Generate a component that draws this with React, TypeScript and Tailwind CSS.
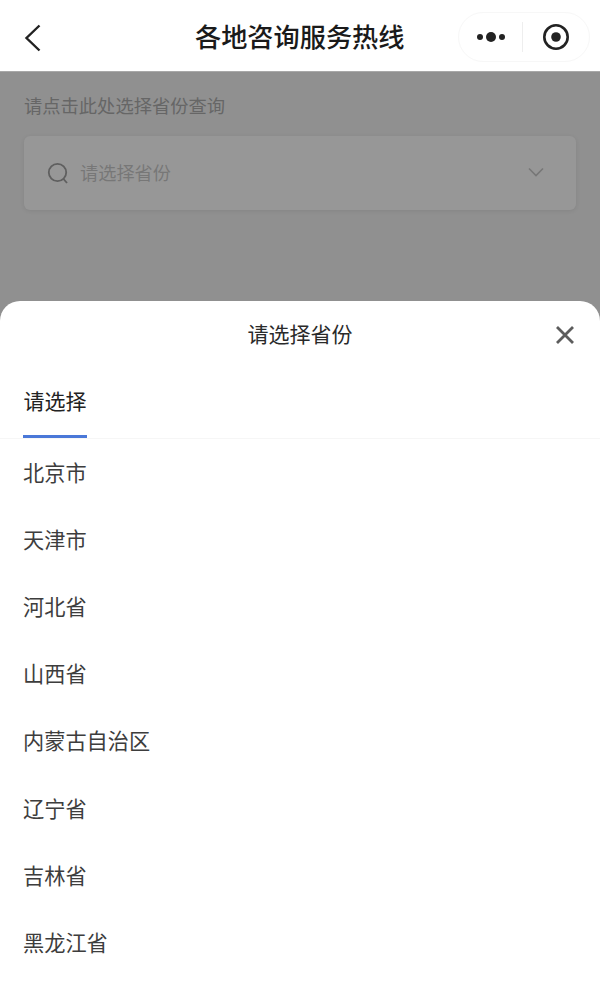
const FONT = "font-['Noto_Sans_CJK_SC','Noto_Sans',sans-serif]";
const provinces = ["北京市", "天津市", "河北省", "山西省", "内蒙古自治区", "辽宁省", "吉林省", "黑龙江省"];

export default function App() {
  return (
    <div className={`${FONT} flex h-[988px] w-[600px] flex-col overflow-hidden bg-[#909090]`}>
      <header className="flex h-[72px] shrink-0 items-center border-b border-[#a8a8a8] bg-white pl-[23px] pr-[10px]">
        <svg width="20" height="30" viewBox="0 0 20 30" fill="none" className="mt-[4px] shrink-0">
          <path d="M16.5 2.5 3.5 15l13 12.5" stroke="#222" strokeWidth="2.4" />
        </svg>
        <h1 className="ml-[152px] flex-1 text-[26.2px] leading-[36px] font-medium whitespace-nowrap text-[#1a1a1a]">各地咨询服务热线</h1>
        <div className="mt-[2px] flex h-[50px] w-[132px] items-center rounded-full border border-[#f7f7f7] bg-white">
          <div className="flex flex-1 items-center justify-center">
            <svg width="30" height="14" viewBox="0 0 30 14" fill="#222">
              <circle cx="4" cy="7" r="3" />
              <circle cx="15" cy="7" r="5" />
              <circle cx="26" cy="7" r="3" />
            </svg>
          </div>
          <div className="h-[30px] w-px bg-[#eeeeee]" />
          <div className="flex w-[66px] items-center justify-center">
            <svg width="28" height="28" viewBox="0 0 28 28" fill="none">
              <circle cx="14" cy="14" r="11.7" stroke="#222" strokeWidth="2.6" />
              <circle cx="14" cy="14" r="4.8" fill="#222" />
            </svg>
          </div>
        </div>
      </header>

      <main className="flex h-[229px] shrink-0 flex-col px-[24px] pt-[18px]">
        <p className="text-[18.3px] leading-[30px] text-[#666666]">请点击此处选择省份查询</p>
        <div className="mt-[16px] flex h-[74px] items-center rounded-[6px] bg-[#979797] pl-[23px] pr-[32px] shadow-[0_1px_4px_rgba(0,0,0,0.08)]">
          <svg width="22" height="24" viewBox="0 0 22 24" fill="none" className="mr-[11px] mt-[2px]">
            <circle cx="10.5" cy="10.5" r="8.7" stroke="#5f5f5f" strokeWidth="1.8" />
            <path d="m16.5 17 3.5 4" stroke="#5f5f5f" strokeWidth="1.8" />
          </svg>
          <span className="flex-1 pb-[2px] text-[18.2px] leading-[26px] text-[#777777]">请选择省份</span>
          <svg width="16" height="10" viewBox="0 0 16 10" fill="none" className="mb-[3px]">
            <path d="m1 1.5 7 7 7-7" stroke="#777" strokeWidth="1.6" />
          </svg>
        </div>
      </main>

      <section className="flex min-h-0 flex-1 flex-col rounded-t-[20px] bg-white">
        <div className="relative flex h-[67px] shrink-0 items-center justify-center">
          <span className="pb-[3px] text-[21px] leading-[30px] text-[#2a2a2a]">请选择省份</span>
          <svg width="20" height="20" viewBox="0 0 20 20" fill="none" className="absolute right-[25px] top-[24px]">
            <path d="m2 2 16 16M18 2 2 18" stroke="#5c5c5c" strokeWidth="2.8" />
          </svg>
        </div>
        <div className="h-[71px] shrink-0 border-b border-[#f6f6f6] px-[23px]">
          <div className="flex h-full w-[64px] flex-col items-center justify-between">
            <span className="pt-[17px] text-[21px] leading-[30px] text-[#222222]">请选择</span>
            <div className="h-[3px] w-full bg-[#4a78d8]" />
          </div>
        </div>
        <ul className="flex flex-col px-[23px]">
          {provinces.map((p) => (
            <li key={p} className="flex h-[67.2px] items-center pb-[2px] text-[21.2px] leading-[30px] text-[#3d3d3d]">
              {p}
            </li>
          ))}
        </ul>
      </section>
    </div>
  );
}
